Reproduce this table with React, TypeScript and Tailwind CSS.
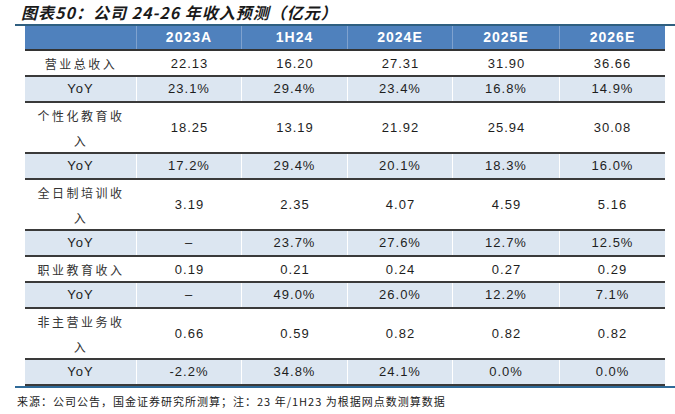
const cols = ["2023A", "1H24", "2024E", "2025E", "2026E"];

type Row = { label: string; values: string[]; yoy: string[]; tall?: boolean };

const rows: Row[] = [
  { label: "营业总收入", values: ["22.13", "16.20", "27.31", "31.90", "36.66"], yoy: ["23.1%", "29.4%", "23.4%", "16.8%", "14.9%"] },
  { label: "个性化教育收入", values: ["18.25", "13.19", "21.92", "25.94", "30.08"], yoy: ["17.2%", "29.4%", "20.1%", "18.3%", "16.0%"], tall: true },
  { label: "全日制培训收入", values: ["3.19", "2.35", "4.07", "4.59", "5.16"], yoy: ["–", "23.7%", "27.6%", "12.7%", "12.5%"], tall: true },
  { label: "职业教育收入", values: ["0.19", "0.21", "0.24", "0.27", "0.29"], yoy: ["–", "49.0%", "26.0%", "12.2%", "7.1%"] },
  { label: "非主营业务收入", values: ["0.66", "0.59", "0.82", "0.82", "0.82"], yoy: ["-2.2%", "34.8%", "24.1%", "0.0%", "0.0%"], tall: true },
];

const grid = "grid grid-cols-[112px_105px_106px_105px_107px_105px]";
const num = "flex items-center justify-center text-[13px] tracking-[1px] text-[#1e1e1e]";

export default function App() {
  return (
    <div className="w-[675px] h-[414px] bg-white font-['Liberation_Sans','Noto_Sans_CJK_SC',sans-serif]">
      <div className="h-[24px] pl-[21px] flex items-center">
        <h1 className="text-[16px] font-bold italic text-[#1a1a1a] leading-none tracking-[1px] font-['Noto_Sans_CJK_SC',sans-serif]">
          图表50：公司 24-26 年收入预测（亿元）
        </h1>
      </div>
      <div className="ml-[15px] h-[2px] bg-[#2f5f80]" />

      <div className="ml-[25px] w-[640px]">
        <div className={`${grid} h-[25px] bg-[#4f81bd] border-b-2 border-[#333]`}>
          <div className="border-r border-[#7fa2cf]" />
          {cols.map((c, i) => (
            <div
              key={c}
              className={`flex items-center justify-center text-white font-bold text-[14px] tracking-[1px] ${i < 4 ? "border-r border-[#7fa2cf]" : ""}`}
            >
              {c}
            </div>
          ))}
        </div>

        {rows.map((r) => (
          <div key={r.label}>
            <div className={`${grid} ${r.tall ? "h-[51px]" : "h-[26px]"} border-b-2 border-[#3a3a3a]`}>
              <div className="flex items-center justify-center px-[10px] text-center text-[12px] leading-[25px] tracking-[2.5px] text-[#333] font-['Noto_Sans_CJK_SC',sans-serif]">
                {r.label}
              </div>
              {r.values.map((v, i) => (
                <div key={i} className={num}>
                  {v}
                </div>
              ))}
            </div>
            <div className={`${grid} h-[26px] bg-[#dce6f1] border-b-2 border-[#3a3a3a]`}>
              <div className={`${num} border-r border-white`}>YoY</div>
              {r.yoy.map((v, i) => (
                <div key={i} className={`${num} ${i < 4 ? "border-r border-white" : ""}`}>
                  {v}
                </div>
              ))}
            </div>
          </div>
        ))}
      </div>

      <div className="ml-[15px] h-[2px] bg-[#2f6a98]" />
      <div className="pl-[17px] pt-[5px] text-[11px] tracking-[1px] text-[#222] font-['Noto_Sans_CJK_SC',sans-serif]">
        来源：公司公告，国金证券研究所测算；注：23 年/1H23 为根据网点数测算数据
      </div>
    </div>
  );
}
